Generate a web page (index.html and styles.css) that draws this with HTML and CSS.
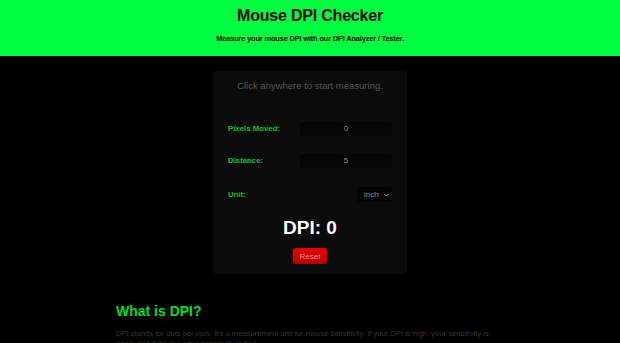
FILE: index.html
```html
<!DOCTYPE html>
<html lang="en">
<head>
<meta charset="UTF-8" />
<title>Mouse DPI Checker</title>
<link rel="stylesheet" href="styles.css">
</head>
<body>
<header class="top">
  <h1>Mouse DPI Checker</h1>
  <p>Measure your mouse DPI with our DPI Analyzer / Tester.</p>
</header>

<main class="page">
  <div id="checker">
    <p class="hint">Click anywhere to start measuring.</p>
    <div class="row">
      <label for="px">Pixels Moved:</label>
      <input id="px" class="field" value="0" readonly>
    </div>
    <div class="row">
      <label for="dist">Distance:</label>
      <input id="dist" class="field" value="5">
    </div>
    <div class="row unit-row">
      <label for="unit">Unit:</label>
      <div class="pick">
        <select id="unit">
          <option>inch</option>
          <option>cm</option>
        </select>
        <svg class="chev" width="5" height="4" viewBox="0 0 5 4"><path d="M0.5 1 L2.5 3 L4.5 1" fill="none" stroke="#aaa" stroke-width="1"/></svg>
      </div>
    </div>
    <div class="dpi">DPI: <span id="dpi">0</span></div>
    <button id="reset">Reset</button>
  </div>

  <section class="info">
    <h2>What is DPI?</h2>
    <p>DPI stands for dots per inch. It's a measurement unit for mouse sensitivity. If your DPI is high, your sensitivity is good, and if it's low, your sensitivity is bad.</p>
  </section>
</main>
</body>
</html>
```

FILE: styles.css
```css
* {
  box-sizing: border-box;
}
body {
  margin: 0;
  background: #000;
  font-family: "Liberation Sans", Arial, sans-serif;
  color: #fff;
}
.top {
  background: #00ff40;
  color: #000;
  text-align: center;
  height: 56px;
  padding-top: 7px;
}
.top h1 {
  margin: 0;
  font-size: 16px;
  font-weight: 700;
  letter-spacing: -0.2px;
}
.top p {
  margin: 9px 0 0;
  font-size: 7.5px;
  font-weight: 700;
  letter-spacing: -0.2px;
}
.page {
  padding-top: 15px;
}
#checker {
  width: 194px;
  margin: 0 auto;
  background: #0b0b0b;
  border-radius: 4px;
  padding: 9px 15px 10px;
  text-align: center;
}
.hint {
  margin: 0 0 30px;
  color: #555;
  font-size: 9.5px;
}
.row {
  display: flex;
  justify-content: space-between;
  align-items: center;
  height: 15px;
  margin-bottom: 17px;
}
.unit-row {
  margin-top: 19px;
  margin-bottom: 15px;
}
.row label {
  color: #00c030;
  font-size: 7.8px;
  font-weight: 700;
}
.field {
  width: 92px;
  height: 14px;
  border: none;
  border-radius: 3px;
  background: #050505;
  color: #888;
  font-family: inherit;
  font-size: 8px;
  text-align: center;
  padding: 0;
  outline: none;
}
.pick {
  position: relative;
  width: 35px;
  height: 15px;
}
#unit {
  display: block;
  appearance: none;
  -webkit-appearance: none;
  width: 100%;
  height: 15px;
  border: none;
  border-radius: 3px;
  background: #050505;
  color: #888;
  font-family: inherit;
  font-size: 8px;
  padding: 0 0 0 7px;
  outline: none;
}
.chev {
  position: absolute;
  right: 3px;
  top: 6px;
  pointer-events: none;
}
.dpi {
  margin-top: 3px;
  font-size: 19px;
  font-weight: 700;
}
#reset {
  margin-top: 9px;
  height: 16px;
  padding: 0 7px;
  border: none;
  border-radius: 3px;
  background: linear-gradient(#e80000, #b80000);
  color: #f09090;
  font-family: inherit;
  font-size: 8px;
  cursor: pointer;
}
.info {
  width: 390px;
  margin: 29px 0 0 116px;
}
.info h2 {
  margin: 0 0 10px;
  color: #00dd30;
  font-size: 14px;
  font-weight: 700;
}
.info p {
  margin: 0;
  color: #363636;
  font-size: 7.6px;
  line-height: 10px;
}
```
